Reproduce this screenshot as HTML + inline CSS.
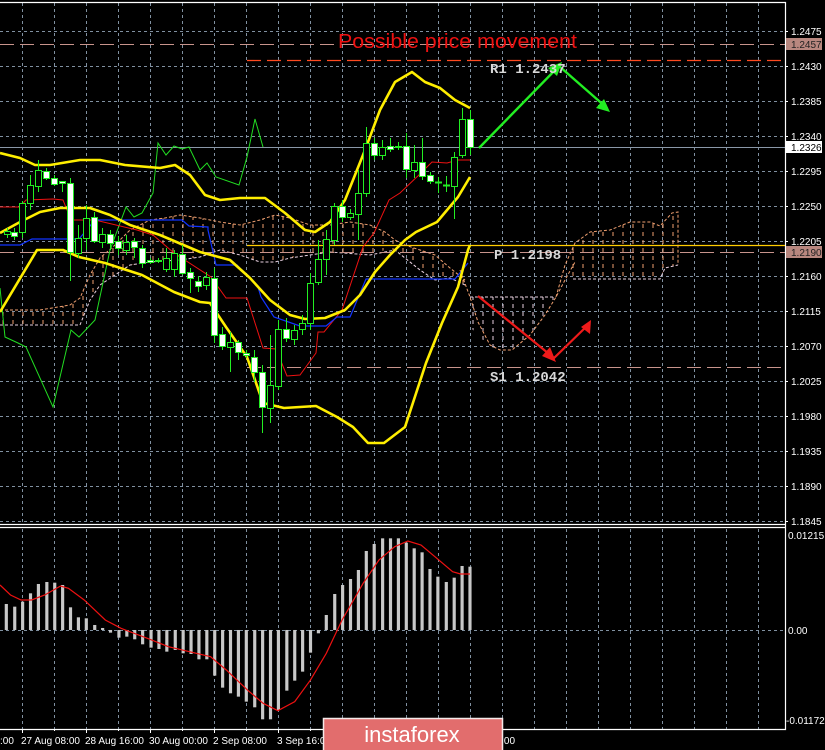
<!DOCTYPE html>
<html><head><meta charset="utf-8"><style>
html,body{margin:0;padding:0;background:#000;width:825px;height:750px;overflow:hidden}
svg{display:block}
text{font-family:"Liberation Sans",sans-serif}
text.mono{font-family:"Liberation Mono",monospace;font-weight:bold}
</style></head><body>
<svg width="825" height="750" viewBox="0 0 825 750" xmlns="http://www.w3.org/2000/svg">
<defs>
<pattern id="ph" width="10" height="8" patternUnits="userSpaceOnUse"><line x1="3" y1="0" x2="3" y2="4" stroke="#f0a070" stroke-width="1"/></pattern>
<pattern id="pw" width="10" height="8" patternUnits="userSpaceOnUse"><line x1="3" y1="0" x2="3" y2="4" stroke="#e8d0e0" stroke-width="1"/></pattern>
</defs>
<rect width="825" height="750" fill="#000"/>
<g stroke="#8090a0" stroke-width="1" stroke-dasharray="3,3">
<path d="M0 31.5H785M0 66.5H785M0 101.5H785M0 136.5H785M0 171.5H785M0 206.5H785M0 241.5H785M0 276.5H785M0 311.5H785M0 346.5H785M0 381.5H785M0 416.5H785M0 451.5H785M0 486.5H785M0 521.5H785M0 630.5H785"/>
<path d="M22.5 3V523M54.5 3V523M86.5 3V523M118.5 3V523M150.5 3V523M182.5 3V523M214.5 3V523M246.5 3V523M278.5 3V523M310.5 3V523M342.5 3V523M374.5 3V523M406.5 3V523M438.5 3V523M470.5 3V523M502.5 3V523M534.5 3V523M566.5 3V523M598.5 3V523M630.5 3V523M662.5 3V523M694.5 3V523M726.5 3V523M758.5 3V523"/>
<path d="M22.5 529V729M54.5 529V729M86.5 529V729M118.5 529V729M150.5 529V729M182.5 529V729M214.5 529V729M246.5 529V729M278.5 529V729M310.5 529V729M342.5 529V729M374.5 529V729M406.5 529V729M438.5 529V729M470.5 529V729M502.5 529V729M534.5 529V729M566.5 529V729M598.5 529V729M630.5 529V729M662.5 529V729M694.5 529V729M726.5 529V729M758.5 529V729"/>
</g>
<g stroke="#fff" stroke-width="1.2" fill="none">
<path d="M0 2.5H785.5V729.5H0"/>
<path d="M0 524.5H785M0 527.5H785"/>
</g>
<polygon fill="url(#ph)" points="0,310 40,310 70,305 80,298 90,275 100,258 115,245 130,230 150,220 165,218 180,215 200,218 220,222 240,225 260,220 275,215 290,218 310,225 330,225 350,222 370,225 385,232 395,240 405,245 420,250 435,255 450,268 465,280 465,285 450,278 435,280 420,270 405,255 395,250 385,250 370,255 350,252 330,252 310,255 290,258 275,262 260,262 240,255 220,250 200,257 180,260 165,262 150,262 130,265 115,275 100,285 90,300 80,325 40,325 0,325"/>
<polyline fill="none" stroke="#f0a070" stroke-dasharray="3,2" points="0,310 40,310 70,305 80,298 90,275 100,258 115,245 130,230 150,220 165,218 180,215 200,218 220,222 240,225 260,220 275,215 290,218 310,225 330,225 350,222 370,225 385,232 395,240 405,245 420,250 435,255 450,268 465,280"/>
<polyline fill="none" stroke="#e8d0e0" stroke-dasharray="3,2" points="0,325 80,325 90,300 100,285 115,275 130,265 150,262 180,260 200,257 220,250 240,255 260,262 275,262 290,258 310,255 330,252 370,255 395,250 420,270 435,280 450,278 465,285"/>
<polygon fill="url(#pw)" points="470,297 555,297 545,315 530,335 510,350 490,347 478,335 470,327"/>
<polyline fill="none" stroke="#f0a070" stroke-dasharray="3,2" points="460,270 470,297 478,322 490,345 500,350 512,350 530,335 545,315 556,297 565,280 575,262"/>
<polyline fill="none" stroke="#e8d0e0" stroke-dasharray="3,2" points="470,297 555,297"/>
<polygon fill="url(#ph)" points="565,265 575,243 590,232 610,230 630,222 650,222 660,226 672,213 678,212 678,265 665,268 660,279 575,279"/>
<polyline fill="none" stroke="#f0a070" stroke-dasharray="3,2" points="556,297 565,265 575,243 590,232 610,230 630,222 650,222 660,226 672,213 678,212 678,265"/>
<polyline fill="none" stroke="#e8d0e0" stroke-dasharray="3,2" points="573,279 660,279 665,268 678,265"/>
<line x1="0" y1="44.5" x2="785" y2="44.5" stroke="#c8948c" stroke-dasharray="14,6"/>
<line x1="247" y1="60.5" x2="785" y2="60.5" stroke="#ff4a20" stroke-width="1.3" stroke-dasharray="14,6"/>
<line x1="0" y1="147.5" x2="785" y2="147.5" stroke="#8a98a8"/>
<line x1="0" y1="252.5" x2="785" y2="252.5" stroke="#c8948c" stroke-dasharray="14,6"/>
<line x1="247" y1="245.5" x2="785" y2="245.5" stroke="#ffcc00" stroke-width="1.2"/>
<line x1="247" y1="367.5" x2="785" y2="367.5" stroke="#c8948c" stroke-dasharray="14,6"/>
<polyline fill="none" stroke="#22dd22" stroke-width="1" points="0,288 5,337 18,343 26,347 53,407 71,330 79,337 95,320 110,250 126,207 134,217 142,213 153,193 158,143 166,155 174,146 182,149 189,147 200,170 207,163 216,177 239,185 247,157 255,119 263,147"/>
<polyline fill="none" stroke="#ee1111" stroke-width="1" points="0,207 20,207 26,200 53,199 63,200 71,220 95,220 137,230 153,235 174,253 211,277 226,298 247,298 263,348 276,349 287,376 300,375 316,353 318,332 324,332 342,310 363,247 374,233 389,200 400,193 421,173 432,162 447,163 458,160 470,160"/>
<polyline fill="none" stroke="#1133ff" stroke-width="1.2" points="0,245 20,245 32,239 79,239 95,220 182,220 189,226 208,227 208,230 216,265 237,265 258,287 261,297 274,317 300,326 326,326 337,317 350,317 366,279 455,279 468,263"/>
<g fill="none" stroke="#ffee00" stroke-width="2.6" stroke-linejoin="round">
<polyline points="0,153 20,158 35,165 50,165 80,160 100,160 125,165 160,168 175,165 190,175 205,195 220,200 240,198 265,198 285,213 305,230 315,232 330,222 345,200 365,150 380,110 395,82 412,72 425,82 440,88 455,100 470,108"/>
<polyline points="0,233 20,222 40,212 60,208 90,208 110,215 130,225 160,235 200,252 230,260 250,278 270,300 290,315 305,319 325,318 345,310 360,295 375,272 390,255 405,240 416,232 437,222 458,197 470,177"/>
<polyline points="0,312 37,250 63,250 79,257 105,263 142,275 174,292 200,302 210,303 226,327 247,357 263,403 284,408 316,406 337,417 353,427 368,443 384,443 405,427 426,363 442,323 458,287 468,250 470,245"/>
</g>
<g stroke="#22ee22" stroke-width="1">
<path d="M7.5 228V238M14.5 228V240M22.5 201V238M30.5 175V210M38.5 160V192M46.5 168V180M54.5 175V186M62.5 181V192M70.5 178V281M78.5 225V258M86.5 205V250M94.5 212V243M102.5 228V248M110.5 230V250M118.5 236V255M126.5 235V255M134.5 238V258M142.5 245V268M150.5 258V264M158.5 258V263M166.5 248V272M174.5 250V277M182.5 245V275M190.5 268V293M198.5 276V292M206.5 272V290M214.5 268V343M222.5 327V350M230.5 332V372M238.5 340V360M246.5 350V358M254.5 350V382M262.5 365V433M270.5 335V423M278.5 320V390M286.5 318V342M294.5 325V345M302.5 315V335M310.5 273V330M318.5 240V285M326.5 230V275M334.5 203V245M342.5 200V222M350.5 209V220M358.5 170V240M366.5 127V197M374.5 138V160M382.5 140V160M390.5 138V152M398.5 142V150M406.5 133V178M414.5 145V178M422.5 138V180M430.5 172V184M438.5 177V193M446.5 176V192M454.5 152V219M462.5 108V158M470.5 110V155"/>
</g>
<g stroke="#22ee22" stroke-width="1">
<rect x="4.5" y="231.5" width="6" height="3" fill="#000"/>
<rect x="11.5" y="232.5" width="6" height="4" fill="#fff"/>
<rect x="19.5" y="203.5" width="6" height="29" fill="#000"/>
<rect x="27.5" y="185.5" width="6" height="18" fill="#000"/>
<rect x="35.5" y="170.5" width="6" height="16" fill="#000"/>
<rect x="43.5" y="171.5" width="6" height="7" fill="#fff"/>
<rect x="51.5" y="178.5" width="6" height="6" fill="#fff"/>
<rect x="59.5" y="181.5" width="6" height="2" fill="#fff"/>
<rect x="67.5" y="183.5" width="6" height="69" fill="#fff"/>
<rect x="75.5" y="238.5" width="6" height="15" fill="#000"/>
<rect x="83.5" y="218.5" width="6" height="20" fill="#000"/>
<rect x="91.5" y="217.5" width="6" height="24" fill="#fff"/>
<rect x="99.5" y="234.5" width="6" height="8" fill="#000"/>
<rect x="107.5" y="234.5" width="6" height="9" fill="#fff"/>
<rect x="115.5" y="241.5" width="6" height="7" fill="#fff"/>
<rect x="123.5" y="242.5" width="6" height="8" fill="#000"/>
<rect x="131.5" y="241.5" width="6" height="6" fill="#fff"/>
<rect x="139.5" y="248.5" width="6" height="15" fill="#fff"/>
<rect x="147.5" y="260.5" width="6" height="2" fill="#fff"/>
<rect x="155.5" y="260.5" width="6" height="1" fill="#fff"/>
<rect x="163.5" y="258.5" width="6" height="11" fill="#000"/>
<rect x="171.5" y="253.5" width="6" height="16" fill="#000"/>
<rect x="179.5" y="254.5" width="6" height="19" fill="#fff"/>
<rect x="187.5" y="272.5" width="6" height="6" fill="#fff"/>
<rect x="195.5" y="281.5" width="6" height="5" fill="#fff"/>
<rect x="203.5" y="277.5" width="6" height="8" fill="#000"/>
<rect x="211.5" y="278.5" width="6" height="57" fill="#fff"/>
<rect x="219.5" y="334.5" width="6" height="12" fill="#fff"/>
<rect x="227.5" y="342.5" width="6" height="5" fill="#000"/>
<rect x="235.5" y="342.5" width="6" height="10" fill="#fff"/>
<rect x="243.5" y="353.5" width="6" height="2" fill="#fff"/>
<rect x="251.5" y="357.5" width="6" height="15" fill="#fff"/>
<rect x="259.5" y="372.5" width="6" height="35" fill="#fff"/>
<rect x="267.5" y="385.5" width="6" height="23" fill="#000"/>
<rect x="275.5" y="329.5" width="6" height="57" fill="#000"/>
<rect x="283.5" y="329.5" width="6" height="9" fill="#fff"/>
<rect x="291.5" y="330.5" width="6" height="9" fill="#000"/>
<rect x="299.5" y="323.5" width="6" height="6" fill="#000"/>
<rect x="307.5" y="283.5" width="6" height="40" fill="#000"/>
<rect x="315.5" y="259.5" width="6" height="23" fill="#000"/>
<rect x="323.5" y="239.5" width="6" height="20" fill="#000"/>
<rect x="331.5" y="206.5" width="6" height="34" fill="#000"/>
<rect x="339.5" y="206.5" width="6" height="11" fill="#fff"/>
<rect x="347.5" y="213.5" width="6" height="4" fill="#000"/>
<rect x="355.5" y="193.5" width="6" height="21" fill="#000"/>
<rect x="363.5" y="143.5" width="6" height="50" fill="#000"/>
<rect x="371.5" y="143.5" width="6" height="12" fill="#fff"/>
<rect x="379.5" y="147.5" width="6" height="8" fill="#000"/>
<rect x="387.5" y="146.5" width="6" height="3" fill="#fff"/>
<rect x="395.5" y="146.5" width="6" height="1" fill="#fff"/>
<rect x="403.5" y="146.5" width="6" height="23" fill="#fff"/>
<rect x="411.5" y="162.5" width="6" height="8" fill="#000"/>
<rect x="419.5" y="162.5" width="6" height="14" fill="#fff"/>
<rect x="427.5" y="175.5" width="6" height="6" fill="#fff"/>
<rect x="435.5" y="182" width="6" height="1" fill="#fff"/>
<rect x="443.5" y="185" width="6" height="1" fill="#fff"/>
<rect x="451.5" y="157.5" width="6" height="29" fill="#000"/>
<rect x="459.5" y="119.5" width="6" height="36" fill="#000"/>
<rect x="467.5" y="119.5" width="6" height="28" fill="#fff"/>
</g>
<g fill="none" stroke="#22ee22" stroke-width="2.4">
<polyline points="479,148 559,66 607,108"/>
</g>
<polygon fill="#22ee22" points="562,62 548,68 557,76"/>
<polygon fill="#22ee22" points="610,112 596,108 604,99"/>
<g fill="none" stroke="#ee1a1a" stroke-width="2.2">
<polyline points="478,296 554,358 588,325"/>
</g>
<polygon fill="#ee1a1a" points="556,362 542,356 550,347"/>
<polygon fill="#ee1a1a" points="591,320 590,334 581,327"/>
<text x="338" y="48" font-size="20" fill="#ee1111" textLength="239" lengthAdjust="spacingAndGlyphs">Possible price movement</text>
<text class="mono" x="490" y="73" font-size="14" fill="#d8d8d8">R1 1.2437</text>
<text class="mono" x="494" y="259" font-size="14" fill="#d8d8d8">P 1.2198</text>
<text class="mono" x="490" y="381" font-size="14" fill="#d8d8d8">S1 1.2042</text>
<rect x="786" y="38" width="36" height="12" fill="#b8877f"/>
<rect x="786" y="141" width="36" height="12" fill="#fff"/>
<rect x="786" y="246" width="36" height="12" fill="#b8877f"/>
<g stroke="#fff"><path d="M785 31.5h3M785 66.5h3M785 101.5h3M785 136.5h3M785 171.5h3M785 206.5h3M785 241.5h3M785 276.5h3M785 311.5h3M785 346.5h3M785 381.5h3M785 416.5h3M785 451.5h3M785 486.5h3M785 521.5h3"/></g>
<g font-size="10" fill="#fff">
<text x="791" y="35">1.2475</text>
<text x="791" y="48" fill="#222">1.2457</text>
<text x="791" y="70">1.2430</text>
<text x="791" y="105">1.2385</text>
<text x="791" y="140">1.2340</text>
<text x="791" y="151" fill="#000">1.2326</text>
<text x="791" y="175">1.2295</text>
<text x="791" y="210">1.2250</text>
<text x="791" y="245">1.2205</text>
<text x="791" y="256" fill="#222">1.2190</text>
<text x="791" y="280">1.2160</text>
<text x="791" y="315">1.2115</text>
<text x="791" y="350">1.2070</text>
<text x="791" y="385">1.2025</text>
<text x="791" y="420">1.1980</text>
<text x="791" y="455">1.1935</text>
<text x="791" y="490">1.1890</text>
<text x="791" y="525">1.1845</text>
<text x="788" y="539">0.01215</text>
<text x="788" y="634">0.00</text>
<text x="786" y="724">-0.01172</text>
</g>
<g transform="translate(0,500) scale(0.5263,0.3333)" fill="#c8c8c8">
<rect x="9" y="312" width="6" height="78"/><rect x="25" y="320" width="6" height="70"/><rect x="40" y="305" width="6" height="85"/><rect x="55" y="280" width="6" height="110"/><rect x="70" y="252" width="6" height="138"/><rect x="86" y="246" width="6" height="144"/><rect x="101" y="248" width="6" height="142"/><rect x="116" y="255" width="6" height="135"/><rect x="131" y="322" width="6" height="68"/><rect x="146" y="352" width="6" height="38"/><rect x="161" y="355" width="6" height="35"/><rect x="177" y="375" width="6" height="15"/><rect x="192" y="384" width="6" height="6"/>
<rect x="207" y="390" width="6" height="8"/><rect x="223" y="390" width="6" height="23"/><rect x="238" y="390" width="6" height="20"/><rect x="253" y="390" width="6" height="28"/><rect x="268" y="390" width="6" height="43"/><rect x="284" y="390" width="6" height="53"/><rect x="299" y="390" width="6" height="57"/><rect x="314" y="390" width="6" height="65"/><rect x="330" y="390" width="6" height="60"/><rect x="345" y="390" width="6" height="70"/><rect x="360" y="390" width="6" height="72"/><rect x="375" y="390" width="6" height="88"/><rect x="390" y="390" width="6" height="88"/><rect x="405" y="390" width="6" height="137"/><rect x="420" y="390" width="6" height="173"/><rect x="435" y="390" width="6" height="190"/><rect x="450" y="390" width="6" height="200"/><rect x="465" y="390" width="6" height="215"/><rect x="481" y="390" width="6" height="232"/><rect x="496" y="390" width="6" height="268"/><rect x="511" y="390" width="6" height="268"/><rect x="526" y="390" width="6" height="240"/><rect x="542" y="390" width="6" height="182"/><rect x="557" y="390" width="6" height="152"/><rect x="572" y="390" width="6" height="125"/><rect x="587" y="390" width="6" height="68"/><rect x="602" y="390" width="6" height="10"/>
<rect x="617" y="345" width="6" height="45"/><rect x="633" y="282" width="6" height="108"/><rect x="648" y="255" width="6" height="135"/><rect x="663" y="237" width="6" height="153"/><rect x="678" y="210" width="6" height="180"/><rect x="693" y="153" width="6" height="237"/><rect x="708" y="132" width="6" height="258"/><rect x="724" y="115" width="6" height="275"/><rect x="739" y="115" width="6" height="275"/><rect x="754" y="115" width="6" height="275"/><rect x="769" y="128" width="6" height="262"/><rect x="784" y="145" width="6" height="245"/><rect x="799" y="157" width="6" height="233"/><rect x="814" y="207" width="6" height="183"/><rect x="829" y="230" width="6" height="160"/><rect x="845" y="246" width="6" height="144"/><rect x="860" y="233" width="6" height="157"/><rect x="875" y="198" width="6" height="192"/><rect x="890" y="200" width="6" height="190"/>
<polyline fill="none" stroke="#ee1111" stroke-width="1.2" vector-effect="non-scaling-stroke" points="0,255 20,285 40,300 60,300 85,285 115,258 130,265 160,300 200,360 230,385 280,415 320,440 360,455 400,470 430,510 470,570 500,610 528,632 560,605 590,540 620,460 650,360 690,250 720,180 750,140 775,123 800,135 830,175 860,215 875,222 893,222"/>
</g>
<g stroke="#fff"><path d="M22.5 729v4M86.5 729v4M150.5 729v4M214.5 729v4M278.5 729v4M54.5 729v2M118.5 729v2M182.5 729v2M246.5 729v2M310.5 729v2"/></g>
<g font-size="10" fill="#fff">
<text x="0" y="744">:00</text>
<text x="21" y="744">27 Aug 08:00</text>
<text x="85" y="744">28 Aug 16:00</text>
<text x="149" y="744">30 Aug 00:00</text>
<text x="213" y="744">2 Sep 08:00</text>
<text x="277" y="744">3 Sep 16:00</text>
<text x="490" y="744">16:00</text>
</g>
<rect x="323.5" y="718.5" width="179" height="33" fill="#e26d6d" stroke="#f4e8e8" stroke-width="1.5"/>
<text x="412" y="742" font-size="22" fill="#fff" text-anchor="middle">instaforex</text>
</svg>
</body></html>
